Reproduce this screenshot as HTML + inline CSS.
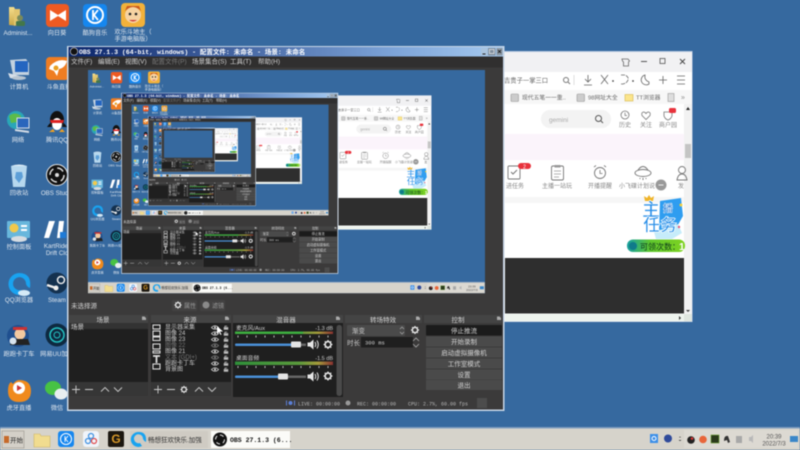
<!DOCTYPE html>
<html lang="zh-CN">
<head>
<meta charset="utf-8">
<title>OBS</title>
<style>
html,body{margin:0;padding:0;width:800px;height:450px;overflow:hidden;background:#36699f}
svg{display:block;filter:blur(.6px)}
text{font-family:"Liberation Sans","Noto Sans CJK SC",sans-serif;font-size:6.5px}
.w{fill:#e8eef5}
.l{fill:#dfe6ee;text-anchor:middle;font-size:6.2px}
.d{fill:#d2d2d2}
.m{font-family:"Liberation Mono","Noto Sans CJK SC",monospace}
.g{fill:#888;font-size:6px;text-anchor:middle}
.b{fill:#d2d2d2;text-anchor:middle}
</style>
</head>
<body>
<svg xmlns="http://www.w3.org/2000/svg" width="800" height="450" viewBox="0 0 800 450">
<defs>
<linearGradient id="tb" x1="0" x2="1" y1="0" y2="0"><stop offset="0" stop-color="#0a246a"/><stop offset=".75" stop-color="#7da4d8"/><stop offset="1" stop-color="#a6caf0"/></linearGradient>
<linearGradient id="vu" x1="0" x2="1" y1="0" y2="0"><stop offset="0" stop-color="#2f8f3a"/><stop offset=".65" stop-color="#5a9a3c"/><stop offset=".85" stop-color="#a59a3a"/><stop offset="1" stop-color="#8a3030"/></linearGradient>
<linearGradient id="pill" x1="0" x2="1" y1="0" y2="0"><stop offset="0" stop-color="#18a0a0"/><stop offset=".4" stop-color="#5fc72c"/><stop offset="1" stop-color="#7ed321"/></linearGradient>
<linearGradient id="fo" x1="0" x2="0" y1="0" y2="1"><stop offset="0" stop-color="#f6df8e"/><stop offset="1" stop-color="#c9a545"/></linearGradient>

<symbol id="gear" viewBox="0 0 10 10"><circle cx="5" cy="5" r="2.9" fill="none" stroke="#e4e4e4" stroke-width="1.6"/><path d="M5 .5v2M5 7.5v2M.5 5h2M7.5 5h2M1.8 1.8l1.4 1.4M6.8 6.8l1.4 1.4M8.2 1.8L6.8 3.2M3.2 6.8L1.8 8.2" stroke="#e4e4e4" stroke-width="1.3"/></symbol>
<symbol id="eye" viewBox="0 0 10 6"><path d="M.5 3Q5-1.5 9.500 3 5 7.500.5 3z" fill="none" stroke="#ddd" stroke-width=".9"/><circle cx="5" cy="3" r="1.300" fill="#ddd"/></symbol>
<symbol id="lock" viewBox="0 0 8 6"><rect x="1" y="2.500" width="6" height="3.500" fill="#bbb"/><path d="M2.500 2.500V1.200h3" fill="none" stroke="#bbb"/></symbol>
<symbol id="spk" viewBox="0 0 12 11"><path d="M.5 3.500h2.500L6.500.5v10L3 7.500H.5z" fill="#e6e6e6"/><path d="M8 3q1.500 2.500 0 5M10 1.500q2.500 4 0 8" fill="none" stroke="#e6e6e6"/></symbol>

<g id="base">
<rect width="800" height="450" fill="#36699f"/>

<!-- desktop icons -->
<path d="M9 7h5l1 2h4v17l-10 -1z" fill="url(#fo)"/><path d="M14 9h6v14l-6 3z" fill="#e3c66f"/><circle cx="20" cy="18" r="3" fill="#7a8a5a"/><rect x="16" y="21" width="9" height="5" rx="1.500" fill="#43774a"/>
<text x="18" y="35" class="l">Administ...</text>
<rect x="46" y="4" width="23" height="23" rx="4" fill="#ee5a22"/><path d="M50 10l8 5 8-5v11l-8-5-8 5z" fill="#fff"/>
<text x="57" y="35" class="l">向日葵</text>
<rect x="83" y="4" width="24" height="23" rx="4" fill="#1687ef"/><circle cx="95" cy="15" r="8" fill="none" stroke="#fff" stroke-width="2"/><path d="M93 10v10M98 10l-4 5 4 5" fill="none" stroke="#fff" stroke-width="1.800"/>
<text x="95" y="35" class="l">酷狗音乐</text>
<rect x="121" y="3" width="24" height="24" rx="4" fill="#f2b13a"/><circle cx="133" cy="15" r="8" fill="#f6d3a2"/><path d="M125 11q8-8 16 0l-2-5h-12z" fill="#c9561e"/><circle cx="130" cy="14" r="1.300" fill="#222"/><circle cx="136" cy="14" r="1.300" fill="#222"/><path d="M129 20q4 3 8 0" fill="#c33"/>
<text x="133" y="34" class="l">欢乐斗地主（</text><text x="133" y="41" class="l">手游电脑版）</text>

<path d="M10 60l16 -1 3 4v12H13z" fill="#c4d2e0"/><rect x="15" y="61" width="13" height="11" fill="#2465c0"/><path d="M8 73l12 3v4l-10-2z" fill="#d7dfe8"/><ellipse cx="19" cy="78" rx="7" ry="2" fill="#b8c4d0"/>
<text x="19" y="89" class="l">计算机</text>
<rect x="46" y="57" width="23" height="23" rx="4" fill="#ef7d22"/><path d="M50 66q8-8 17-5-2 7-8 8l-2 7-3-5-5-2z" fill="#fff"/><circle cx="56" cy="68" r="2.500" fill="#e8a020"/>
<text x="59" y="89" class="l">斗鱼直播</text>

<circle cx="16" cy="120" r="9" fill="#2aa6b8"/><path d="M9 116q6-5 12 0l-3 6-7 1z" fill="#5cbb4a"/><rect x="17" y="118" width="12" height="10" fill="#2a66bc" stroke="#d6dee8"/><path d="M15 129l14 2v2l-14-2z" fill="#d4dce6"/>
<text x="18" y="142" class="l">网络</text>
<ellipse cx="57" cy="120" rx="7" ry="9" fill="#111"/><ellipse cx="57" cy="124" rx="5" ry="6" fill="#fff"/><path d="M50 123l-3 4 5 0zM64 123l3 4-5 0z" fill="#111"/><path d="M50 120h14l-1 3h-12z" fill="#d22"/><path d="M49 132h6l-2-3zM59 132h6l-3-3z" fill="#f0a020"/>
<text x="57" y="142" class="l">腾讯QQ</text>

<path d="M11 166h16l-2 21H13z" fill="#b7d8ee"/><path d="M11 166q8-3 16 0" fill="#e3f0f8"/><path d="M16 172l6 0 1 5-4 6-4-5z" fill="#5d9fd8"/>
<text x="19" y="195" class="l">回收站</text>
<circle cx="57" cy="175" r="10.500" fill="#111" stroke="#e6e6e6"/><circle cx="57" cy="175" r="7" fill="none" stroke="#ddd" stroke-width="1.500" stroke-dasharray="7 4"/><circle cx="57" cy="175" r="2" fill="#ddd"/>
<text x="57" y="195" class="l">OBS Studio</text>

<rect x="7" y="221" width="23" height="17" rx="1" fill="#68b7dc"/><circle cx="14" cy="228" r="4.500" fill="#f2c94c"/><rect x="21" y="225" width="6" height="2" fill="#fff"/><rect x="21" y="229" width="6" height="2" fill="#fff"/><ellipse cx="19" cy="239" rx="8" ry="3" fill="#d6dce2"/>
<text x="19" y="249" class="l">控制面板</text>
<path d="M49 221h6l-6 17h-5z" fill="#fff"/><path d="M59 221h5l-2 17h-5z" fill="#fff"/><rect x="60" y="232" width="6" height="6" fill="#1e7bd8"/>
<text x="57" y="248" class="l">KartRider</text><text x="57" y="255" class="l">Drift Clo</text>

<path d="M19 273a11 11 0 1 0 5 21l-3-4a6.500 6.500 0 1 1 5-6q1 3 4 4 2-15-11-15z" fill="#19a3f0"/><ellipse cx="24" cy="293" rx="6" ry="3" fill="#d5eaf7"/>
<text x="19" y="302" class="l">QQ浏览器</text>
<circle cx="57" cy="283" r="10.500" fill="#14314f"/><circle cx="61" cy="280" r="3.500" fill="none" stroke="#eee" stroke-width="1.500"/><path d="M47 285l9 3" stroke="#eee" stroke-width="2.500"/><circle cx="56" cy="288" r="2.500" fill="#eee"/>
<text x="57" y="302" class="l">Steam</text>

<circle cx="18" cy="336" r="11" fill="#1f4f8f"/><circle cx="20" cy="334" r="5.500" fill="#f2c9a0"/><path d="M10 345h20l-2-6H12z" fill="#222"/><circle cx="13" cy="341" r="3.500" fill="#d8e4ee"/><rect x="13" y="327" width="14" height="3" fill="#c33"/>
<text x="19" y="356" class="l">跑跑卡丁车</text>
<circle cx="57" cy="335" r="11.500" fill="#0e2940"/><circle cx="57" cy="335" r="7" fill="none" stroke="#24c2c2" stroke-width="1.500"/><circle cx="57" cy="335" r="3" fill="none" stroke="#24c2c2"/>
<text x="57" y="356" class="l">网易UU加速</text>

<path d="M19 380q12 0 12 11t-12 11q-11 0-11-11 0-7 3-9l2 2q3-4 6-4z" fill="#f08a1d"/><circle cx="19" cy="388" r="6" fill="#fff"/><path d="M17 385l5 3-5 3z" fill="#c33"/>
<text x="19" y="410" class="l">虎牙直播</text>
<ellipse cx="53" cy="388" rx="8" ry="7" fill="#47c244"/><ellipse cx="61" cy="394" rx="6.500" ry="5.500" fill="#e8eef0"/>
<text x="57" y="410" class="l">微信</text>

<!-- browser window -->
<rect x="480" y="51" width="212.500" height="271" fill="#b8c8e0"/>
<rect x="480" y="52" width="212" height="269.500" fill="#fff"/>
<rect x="480" y="52" width="212" height="20" fill="#f1f1f3"/>
<rect x="480" y="90" width="212" height="14" fill="#f7f7f7"/>
<path d="M622 59h6l1.500 2-1 1v4h-5v-4l-1-1z" fill="none" stroke="#666" stroke-width=".8"/>
<path d="M641 61.500h6" stroke="#555"/><rect x="660" y="58.500" width="5" height="5" fill="none" stroke="#555" stroke-width=".8"/><path d="M680 59l5 5m0-5l-5 5" stroke="#444" stroke-width=".9"/>
<text x="504" y="82.500" fill="#666" style="font-size:6.300px">吉贵子一掌三口</text>
<circle cx="566" cy="80" r="2.500" fill="none" stroke="#777"/><path d="M568 82l2 2" stroke="#777"/><path d="M574 75v10" stroke="#ddd"/>
<path d="M588 75v7m-3-3l3 3 3-3M584 85h8" fill="none" stroke="#666" stroke-width=".8"/>
<path d="M601 75l7 9m0-9l-7 9" stroke="#666" stroke-width=".8"/><circle cx="613" cy="81" r=".9" fill="#444"/>
<path d="M621 75h4q4 2 3 5t-5 4h-2" fill="none" stroke="#666" stroke-width=".8" stroke-dasharray="4 1"/><circle cx="633" cy="81" r=".9" fill="#444"/>
<path d="M648 84a5 5 0 1 1-4-9q-1 5 4 7z" fill="none" stroke="#666" stroke-width=".8" transform="translate(1 0)"/>
<path d="M659 80h8m-4-4v8" stroke="#666" stroke-width=".8"/><path d="M677 76h8M677 80h8M677 84h8" stroke="#666" stroke-width=".8"/>
<rect x="511" y="94" width="7.500" height="7.500" rx="1" fill="#ccc" stroke="#999" stroke-width=".6"/><text x="522" y="99.500" fill="#666" style="font-size:5.800px">现代五笔一一重..</text>
<rect x="577" y="94" width="7.500" height="7.500" rx="1" fill="#ccc" stroke="#999" stroke-width=".6"/><text x="588" y="99.500" fill="#666" style="font-size:5.800px">98网址大全</text>
<rect x="625" y="94.500" width="8" height="6.500" fill="#fbe58c" stroke="#d8b84f" stroke-width=".6"/><text x="636" y="99.500" fill="#666" style="font-size:5.800px">TT浏览器</text>
<rect x="668" y="93.500" width="6" height="8" fill="#ddd" stroke="#999" stroke-width=".6"/><text x="681" y="99.500" fill="#888" style="font-size:7px">»</text>
<rect x="541" y="110" width="70" height="18" rx="9" fill="#f3f3f3"/><text x="549" y="122" fill="#aaa" style="font-size:6.500px">gemini</text><circle cx="598.500" cy="118.500" r="3" fill="none" stroke="#555"/><path d="M601 121l2 2" stroke="#555"/>
<circle cx="625" cy="115" r="4" fill="none" stroke="#777" stroke-width=".8"/><path d="M625 112.500v3h2" fill="none" stroke="#777" stroke-width=".7"/><text x="625" y="127" class="g">历史</text>
<path d="M646 119.500l-4-4q-1-3 1.500-3.500 1.500 0 2.500 1.500 1-1.500 2.500-1.500 2.500.5 1.500 3.500z" fill="none" stroke="#777" stroke-width=".8"/><text x="646" y="127" class="g">关注</text>
<path d="M664 112h8v4q-1 3-4 4-3-1-4-4z" fill="none" stroke="#777" stroke-width=".8"/><rect x="669" y="108" width="7" height="5" rx="1.500" fill="#e8323c"/><text x="668" y="127" class="g">商户园</text>
<rect x="505" y="134" width="179" height="26" fill="#fbf4fb"/>
<rect x="684" y="104" width="8" height="210" fill="#f2f2f2"/><path d="M688 107l-2 3h4z" fill="#222"/><rect x="685" y="144" width="6" height="14" fill="#c4c4c4"/>
<rect x="508" y="166" width="12" height="13" rx="1" fill="none" stroke="#777" stroke-width=".9"/><path d="M511 172l2 2 4-4" fill="none" stroke="#777"/><rect x="518" y="163" width="13" height="6" rx="3" fill="#e8323c"/><text x="524.500" y="168.500" fill="#fff" style="font-size:5px;text-anchor:middle">2</text>
<text x="515" y="188" class="g">进任务</text>
<rect x="551.500" y="166" width="12" height="14" rx="1.500" fill="none" stroke="#777" stroke-width=".9"/><rect x="554.500" y="165" width="6" height="2.500" fill="#999"/><path d="M554 171h7M554 174h7M554 177h5" stroke="#999" stroke-width=".7"/><text x="557" y="188" class="g">主播一站玩</text>
<circle cx="600" cy="173" r="5.500" fill="none" stroke="#777" stroke-width=".9"/><path d="M600 170v3.500h2.500M594 167l2-1.500M606 167l-2-1.500" fill="none" stroke="#777" stroke-width=".8"/><text x="600" y="188" class="g">开播提醒</text>
<ellipse cx="643" cy="173" rx="8" ry="3.500" fill="none" stroke="#777" stroke-width=".9"/><path d="M638 170q5-7 10 0" fill="none" stroke="#777" stroke-width=".9"/><path d="M640 178v1M643 178v2M646 178v1" stroke="#777"/><text x="637" y="188" class="g">小飞碟计划说</text>
<circle cx="661" cy="185" r="5.500" fill="#999"/><path d="M658.500 185h5" stroke="#eee"/>
<circle cx="682" cy="170" r="3.500" fill="none" stroke="#777" stroke-width=".9"/><path d="M677 180q1-6 5-6t5 6z" fill="none" stroke="#777" stroke-width=".9"/><text x="681" y="188" class="g">发</text>
<rect x="505" y="197" width="179" height="6" fill="#f6f6f6"/>
<!-- mascot -->
<path d="M660 201l21-3 2 18-8 14-16 1z" fill="#2f9df0"/>
<path d="M654 232l24-8 4 9-10 6h-16z" fill="#c6ecfa"/>
<path d="M645 201l-1-5 3 2 2-3 2 3 3-2-1 5z" fill="#f0b428"/>
<text x="651" y="216" fill="#2a8fe8" stroke="#fff" stroke-width=".7" style="font-size:18px;font-weight:700;text-anchor:middle">主</text>
<text x="668" y="212" fill="#1a6fd0" stroke="#fff" stroke-width=".4" style="font-size:10px;font-weight:700;text-anchor:middle">播</text>
<text x="660" y="231" fill="#2a8fe8" stroke="#fff" stroke-width=".7" style="font-size:17px;font-weight:700;text-anchor:middle">任务</text>
<circle cx="681" cy="205" r="1.500" fill="#f5d040"/><circle cx="679" cy="227" r="1.200" fill="#e85a7a"/>
<rect x="627" y="239.500" width="58" height="12.500" rx="6" fill="url(#pill)"/><circle cx="633" cy="246" r="4" fill="#107a8a"/><text x="640" y="249.500" fill="#0d3b1c" style="font-size:8px">可领次数：</text><text x="679" y="250" fill="#fff" style="font-size:10px;font-weight:700">1</text>
<rect x="505" y="258" width="179" height="55.500" fill="#2e2e2e"/>
<rect x="505" y="314" width="179" height="7.500" fill="#eef4ee"/><path d="M679 316l2 2-2 2z" fill="#333"/><path d="M686 310l2 2 2-2z" fill="#333"/><rect x="684" y="314" width="8" height="7.500" fill="#dfe6df"/>

<!-- OBS window -->
<rect x="67" y="46" width="437.500" height="365" fill="#c8d6e6"/>
<rect x="68.500" y="47" width="434.500" height="9.500" fill="url(#tb)"/>
<circle cx="74" cy="51.500" r="3.700" fill="#111" stroke="#ddd" stroke-width=".6"/>
<text x="79" y="54" class="m" fill="#fff" style="font-size:6.500px;font-weight:700">OBS 27.1.3 (64-bit, windows) - 配置文件: 未命名 - 场景: 未命名</text>
<rect x="481" y="48" width="6.500" height="7.500" fill="#a9c3de"/><path d="M482.500 54h3" stroke="#222"/><rect x="488" y="48" width="7.500" height="7.500" fill="#7f8e9e"/><rect x="489.500" y="49.500" width="4.500" height="4" fill="none" stroke="#eee" stroke-width=".7"/><rect x="496.500" y="48" width="6" height="7.500" fill="#8c98a4"/><path d="M498 50l3 3m0-3l-3 3" stroke="#111" stroke-width=".8"/>
<rect x="68.500" y="56.500" width="434.500" height="353" fill="#3b3a3a"/>
<rect x="68.500" y="56.500" width="434.500" height="11" fill="#302f2f"/>
<text x="71" y="63.500" class="d">文件(F)</text><text x="98" y="63.500" class="d">编辑(E)</text><text x="125" y="63.500" class="d">视图(V)</text><text x="152" y="63.500" fill="#777">配置文件(P)</text><text x="192" y="63.500" class="d">场景集合(S)</text><text x="230" y="63.500" class="d">工具(T)</text><text x="258" y="63.500" class="d">帮助(H)</text>
<rect x="88" y="70" width="397" height="223" fill="#36699f"/>

<text x="71" y="308" class="d">未选择源</text>
<rect x="172" y="300" width="25" height="11" rx="1" fill="#434242"/><use href="#gear" x="174" y="301" width="8" height="8"/><text x="184" y="308" fill="#999" style="font-size:6px">属性</text>
<rect x="200" y="300" width="25" height="11" rx="1" fill="#434242"/><circle cx="206" cy="305" r="3.500" fill="#8a8a8a"/><text x="212" y="308" fill="#999" style="font-size:6px">滤镜</text>

<!-- dock headers -->
<rect x="69" y="315" width="79" height="8" fill="#444"/><rect x="151" y="315" width="80" height="8" fill="#444"/><rect x="233" y="315" width="110" height="8" fill="#444"/><rect x="345" y="315" width="77" height="8" fill="#444"/><rect x="424" y="315" width="78" height="8" fill="#444"/>
<text x="103" y="322" class="b">场景</text><text x="190" y="322" class="b">来源</text><text x="286" y="322" class="b">混音器</text><text x="383" y="322" class="b">转场特效</text><text x="458" y="322" class="b">控制</text>
<path d="M142 316.500h2.500l1.500 1.500v2h-4zM225 316.500h2.500l1.500 1.500v2h-4zM336 316.500h2.500l1.500 1.500v2h-4zM416 316.500h2.500l1.500 1.500v2h-4zM497 316.500h2.500l1.500 1.500v2h-4z" fill="#aaa"/>

<!-- scenes -->
<rect x="69" y="323" width="79" height="6" fill="#333"/><rect x="69" y="329" width="79" height="53" fill="#1f1f1f"/>
<text x="71" y="329" class="d">场景</text>
<rect x="69" y="382" width="79" height="14" fill="#363636"/>
<path d="M72 389.500h8M76 385.500v8M85 389.500h8" stroke="#ccc" stroke-width=".9"/><path d="M101 391.500l4-4 4 4M114 387.500l4 4 4-4" fill="none" stroke="#ccc" stroke-width=".9"/>

<!-- sources -->
<rect x="151" y="323" width="80" height="59" fill="#1f1f1f"/>
<g fill="#222" stroke="#ddd" stroke-width="1.100"><rect x="153" y="325" width="7" height="4"/><rect x="153" y="331" width="7" height="5"/><rect x="153" y="337" width="7" height="3.500"/><rect x="153" y="344" width="7" height="5"/><rect x="153" y="351" width="7" height="2"/><rect x="153" y="364" width="7" height="5"/></g>
<path d="M153 356h7M156.500 356v7" stroke="#ddd" stroke-width="1.800"/>
<text x="165" y="329" fill="#c8c8c8" style="font-size:6px">显示器采集</text><text x="165" y="335" fill="#c8c8c8" style="font-size:6px">图像 24</text><text x="165" y="341" fill="#c8c8c8" style="font-size:6px">图像 23</text><text x="165" y="347" fill="#777" style="font-size:6px">图像 22</text><text x="165" y="353" fill="#c8c8c8" style="font-size:6px">图像 21</text><text x="165" y="359" fill="#777" style="font-size:6px">文本 (GDI+)</text><text x="165" y="365" fill="#c8c8c8" style="font-size:6px">跑跑卡丁车</text><text x="165" y="371" fill="#c8c8c8" style="font-size:6px">背景图</text>
<use href="#eye" x="211" y="325" width="8" height="5"/><use href="#eye" x="211" y="331" width="8" height="5"/><use href="#eye" x="211" y="337" width="8" height="5"/><use href="#eye" x="211" y="343" width="8" height="5" opacity=".5"/><use href="#eye" x="211" y="349" width="8" height="5"/><use href="#eye" x="211" y="355" width="8" height="5" opacity=".5"/><use href="#eye" x="211" y="361" width="8" height="5"/><use href="#eye" x="211" y="367" width="8" height="5"/>
<use href="#lock" x="223" y="325" width="6" height="5"/><use href="#lock" x="223" y="331" width="6" height="5"/><use href="#lock" x="223" y="337" width="6" height="5"/><use href="#lock" x="223" y="343" width="6" height="5"/><use href="#lock" x="223" y="349" width="6" height="5"/><use href="#lock" x="223" y="355" width="6" height="5"/><use href="#lock" x="223" y="361" width="6" height="5"/><use href="#lock" x="223" y="367" width="6" height="5"/>
<rect x="151" y="382" width="80" height="14" fill="#363636"/>
<path d="M154 389.500h8M158 385.500v8M167 389.500h8" stroke="#ccc" stroke-width=".9"/><use href="#gear" x="180" y="385.500" width="8" height="8"/><path d="M195 391.500l4-4 4 4M208 387.500l4 4 4-4" fill="none" stroke="#ccc" stroke-width=".9"/>

<!-- mixer -->
<rect x="233" y="323" width="110" height="74" fill="#1f1f1f"/>
<rect x="336.500" y="325" width="5.500" height="71" rx="2.500" fill="#4a4a4a"/>
<text x="236" y="330" fill="#ccc" style="font-size:5.800px">麦克风/Aux</text><text x="333" y="330" fill="#ccc" style="font-size:5.500px;text-anchor:end">-1.3 dB</text>
<rect x="235" y="331.500" width="98" height="2.500" fill="url(#vu)"/><rect x="235" y="331.500" width="68" height="2.500" fill="#3eae40"/>
<path d="M238 335.500v2M247 335.500v2M256 335.500v2M265 335.500v2M274 335.500v2M283 335.500v2M292 335.500v2M301 335.500v2M310 335.500v2M319 335.500v2M328 335.500v2" stroke="#bbb"/>
<rect x="235" y="343.500" width="66" height="2.500" rx="1" fill="#4a8fd6"/><rect x="301" y="343.500" width="5" height="2.500" fill="#666"/><rect x="291" y="341.500" width="10" height="6" rx="1" fill="#e4e4e4"/>
<use href="#spk" x="307" y="339" width="12" height="11"/><use href="#gear" x="323" y="339.500" width="10" height="10"/>
<text x="236" y="360" fill="#ccc" style="font-size:5.800px">桌面音频</text><text x="333" y="360" fill="#ccc" style="font-size:5.500px;text-anchor:end">-1.5 dB</text>
<rect x="235" y="361.500" width="98" height="3.500" fill="url(#vu)"/>
<path d="M238 366v2M247 366v2M256 366v2M265 366v2M274 366v2M283 366v2M292 366v2M301 366v2M310 366v2M319 366v2M328 366v2" stroke="#bbb"/>
<rect x="235" y="375.500" width="46" height="2.500" rx="1" fill="#4a8fd6"/><rect x="281" y="375.500" width="25" height="2.500" fill="#666"/><rect x="278" y="373.500" width="10" height="6" rx="1" fill="#e4e4e4"/>
<use href="#spk" x="307" y="371" width="12" height="11"/><use href="#gear" x="323" y="371" width="10" height="10"/>

<!-- transitions -->
<rect x="347" y="325" width="58" height="11" rx="1" fill="#4a4a4a"/><text x="352" y="333" fill="#ccc" style="font-size:6.500px">渐变</text><path d="M400 329l2-2 2 2M400 332l2 2 2-2" fill="none" stroke="#aaa" stroke-width=".7"/>
<use href="#gear" x="410.500" y="325.500" width="9" height="9"/>
<text x="347" y="345" fill="#ccc">时长</text><rect x="361" y="337" width="52" height="10.500" fill="#1f1f1f"/><text x="365" y="344.500" class="m" fill="#ccc" style="font-size:5.500px">300 ms</text><path d="M413 341l3-3 3 3M413 344l3 3 3-3" fill="none" stroke="#aaa" stroke-width=".8"/>

<!-- controls -->
<rect x="426" y="325" width="76" height="10.500" rx="1" fill="#1b1b1b"/><rect x="426" y="336.500" width="76" height="10" fill="#4a4a4a"/><rect x="426" y="347.500" width="76" height="10" fill="#4a4a4a"/><rect x="426" y="358.500" width="76" height="10" fill="#4a4a4a"/><rect x="426" y="369.500" width="76" height="10" fill="#4a4a4a"/><rect x="426" y="380" width="76" height="10" fill="#4a4a4a"/>
<text x="464" y="333" class="b">停止推流</text><text x="464" y="344" class="b">开始录制</text><text x="464" y="355" class="b">启动虚拟摄像机</text><text x="464" y="366" class="b">工作室模式</text><text x="464" y="377" class="b">设置</text><text x="464" y="387.500" class="b">退出</text>

<!-- status -->
<circle cx="290.500" cy="403" r="2" fill="#5b7fd6"/><path d="M286.500 400.500v5M294.500 400.500v5" stroke="#5b7fd6"/>
<text x="298" y="405.500" class="m" fill="#b8b8b8" style="font-size:5px">LIVE: 00:00:00</text>
<circle cx="348" cy="403" r="2.500" fill="#999"/><text x="357" y="405.500" class="m" fill="#b8b8b8" style="font-size:5px">REC: 00:00:00</text>
<text x="408" y="405.500" class="m" fill="#b8b8b8" style="font-size:5px">CPU: 2.7%, 60.00 fps</text>
<rect x="477" y="398" width="10" height="10" fill="#4c4c4c"/>

<path d="M217 326l0 8 2-2 1.500 3 1-.5-1.500-3h3z" fill="#fff"/>

<!-- taskbar -->
<rect y="427" width="800" height="1.500" fill="#7f9dbf"/>
<rect y="428.500" width="800" height="21.500" fill="#d6d3cb"/>
<rect x="2" y="431" width="22" height="17" fill="#d4d0c8" stroke="#9a968e" stroke-width=".6"/><rect x="4" y="436" width="5" height="7" fill="#c66a2a"/><text x="10" y="442.500" fill="#222" style="font-size:6.500px">开始</text>
<path d="M34 434h6l1 2h9v11H34z" fill="#f1dc8f" stroke="#cdb566" stroke-width=".6"/>
<rect x="58" y="431" width="16" height="16" rx="3" fill="#1687ef"/><circle cx="66" cy="439" r="5.500" fill="none" stroke="#fff"/><path d="M65 436v6M68 436l-2.500 3 2.500 3" fill="none" stroke="#fff" stroke-width=".9"/>
<rect x="83" y="431" width="16" height="16" rx="3" fill="#f0f4fa"/><circle cx="88" cy="441" r="2.500" fill="none" stroke="#3a8ee0" stroke-width="1.200"/><circle cx="94" cy="441" r="2.500" fill="none" stroke="#e04848" stroke-width="1.200"/><circle cx="91" cy="436" r="2.500" fill="none" stroke="#3a8ee0" stroke-width="1.200"/>
<rect x="108" y="431" width="16" height="16" rx="2" fill="#1c1710"/><text x="116" y="443" fill="#d99a2a" style="font-size:12px;font-weight:700;text-anchor:middle">G</text>
<rect x="130" y="431" width="78" height="17" fill="#cfcbc3"/>
<path d="M139 432a7.500 7.500 0 1 0 3 14l-2-3a4.500 4.500 0 1 1 3-4q1 2 3 3 1-10-7-10z" fill="#19a3f0"/>
<text x="148" y="442" fill="#333" style="font-size:6.500px">畅想狂欢快乐.加强</text>
<rect x="211" y="431" width="79" height="17" fill="#fbfbf8"/><circle cx="220" cy="439.500" r="7" fill="#111"/><circle cx="220" cy="439.500" r="4.500" fill="none" stroke="#ddd" stroke-dasharray="4 3"/>
<text x="230" y="442" class="m" fill="#111" style="font-size:6.500px;font-weight:700">OBS 27.1.3 (6...</text>
<rect x="650" y="434" width="8" height="9" fill="#3d8fe8"/><circle cx="654" cy="438.500" r="2" fill="none" stroke="#fff"/>
<circle cx="668" cy="438.500" r="4" fill="#2f4a9a"/><path d="M680 436.500l-1 1h2z" fill="#333"/><path d="M680 441l-1.500-1h3z" fill="#222"/>
<rect x="684" y="430" width="114" height="18" fill="#dcd9d2"/>
<circle cx="691" cy="440" r="3.800" fill="#222"/><circle cx="692" cy="438.500" r="1.300" fill="#d33"/>
<circle cx="703" cy="439.500" r="3.800" fill="#e8653a"/><rect x="711" y="435" width="8" height="8" fill="#2b3a1c" stroke="#6aa030" stroke-width=".6"/>
<path d="M724 441q0-6 4-5l2 6-2 1-1-3z" fill="#333"/><rect x="736" y="436" width="6" height="7" fill="#a8a8a8"/><path d="M749 437h2l2-2v8l-2-2h-2z" fill="#b8b8b8"/>
<text x="774" y="438.500" fill="#555" style="font-size:6px;text-anchor:middle">20:39</text><text x="774" y="445.500" fill="#555" style="font-size:6px;text-anchor:middle">2022/7/3</text>
<rect x="790" y="436" width="8" height="6" fill="#3a86c8"/>
</g>

<g id="L3"><use href="#base"/></g>
<g id="L2"><use href="#base"/><g transform="translate(88 70) scale(.496)"><use href="#L3"/></g></g>
<g id="L1"><use href="#base"/><g transform="translate(88 70) scale(.496)"><use href="#L2"/></g></g>
</defs>

<use href="#base"/>
<g transform="translate(88 70) scale(.496)"><use href="#L1"/></g>
</svg>
</body>
</html>
